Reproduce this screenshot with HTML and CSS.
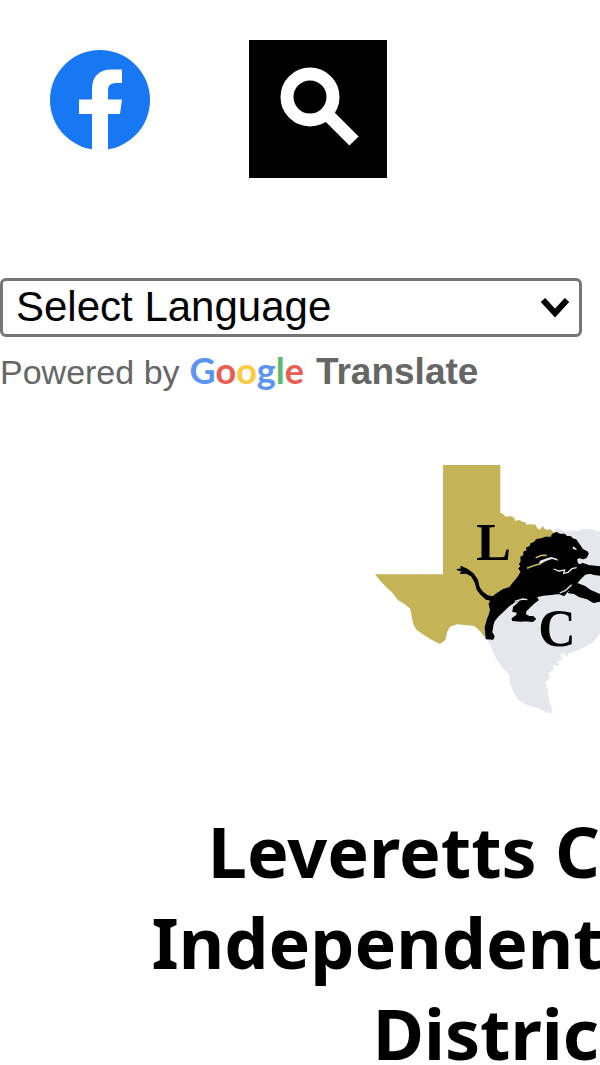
FILE: index.html
```html
<!DOCTYPE html>
<html lang="en">
<head>
    <meta charset="UTF-8">
    <meta name="viewport" content="width=device-width, initial-scale=1.0">
    <title>Leveretts Chapel Independent School District</title>
    <link rel="stylesheet" href="styles.css">
</head>
<body>
    <div class="topbar">
        <a class="facebook" href="#" aria-label="Facebook">
            <svg viewBox="0 0 100 100" width="100" height="100">
                <circle cx="50" cy="50" r="50" fill="#1877f2"/>
                <path fill="#fff" d="M42 100V64H29V49.500H42V39C42 26 50 19.500 61 19.500H72V33H67C61 33 58 35 58 40V49.500H72L70 64H58V100Z"/>
            </svg>
        </a>
        <button class="search" type="button" aria-label="Search">
            <svg viewBox="0 0 138 138" width="138" height="138" fill="none" stroke="#fff">
                <circle cx="61" cy="57" r="23" stroke-width="13"/>
                <path d="M77 73L105 101" stroke-width="13"/>
            </svg>
        </button>
    </div>

    <div class="translate">
        <div class="selectWrap">
            <select class="language" aria-label="Language Translate Widget">
                <option>Select Language</option>
            </select>
            <svg class="arrow" viewBox="0 0 28 20" width="28" height="20">
                <path d="M2 2L14 15L26 2" fill="none" stroke="#000" stroke-width="6"/>
            </svg>
        </div>
        <div class="powered">
            <span>Powered by</span>
            <a class="google" href="#">
                <span class="wordmark"><span class="blue">G</span><span class="red">o</span><span class="yellow">o</span><span class="blue">g</span><span class="green">l</span><span class="red">e</span></span>
                <b>Translate</b>
            </a>
        </div>
    </div>

    <header class="school">
        <svg class="logo" viewBox="15 30 792 747" width="264" height="249">
            <!-- state -->
            <path fill="#e6e7ec" d="M545 232L562 220L575 224L590 232L606 226L625 228L640 222L660 222L690 230L720 238L755 245L765 330L790 390L786 450L770 490L720 515L690 535L670 562L640 578L620 588L594 596L592 607L580 594L570 600L578 615L562 620L566 632L548 630L550 645L535 655L540 668L526 682L532 700L536 730L549 773L532 774L505 760L470 750L444 735L430 710L420 685L418 660L395 635L375 605L358 565L345 548L400 400Z"/>
            <path fill="#c5b358" d="M219 30H391V173L400 178L408 186L416 184L424 184L433 188L435 197L448 195L458 201L465 201L470 209L486 207L491 211L495 206L501 218L508 224L519 214L524 222L532 224L542 223L552 234L500 400L360 480L345 549L330 528L313 513L262 508L240 515L232 530L226 555L210 567L190 557L165 542L140 525L131 510L126 490L121 462L104 447L84 436L66 412L48 396L28 374L15 358H219Z"/>
            <!-- lion -->
            <g transform="translate(240 195)">
                <path stroke="#000" stroke-width="4" stroke-linejoin="round" d="M22 149L36 147L33 140L51 148L59 154L70 162L82 180L87 202L98 217L113 228L128 231L143 220L160 209L179 203L190 189L205 171L214 155L207 146L214 138L209 132L214 124L213 111L222 107L222 96L232 92L230 84L242 78L242 72L253 67L260 59L274 57L286 52L304 52L307 44L319 38L329 43L343 43L349 49L361 50L368 57L378 60L384 69L391 79L398 89L412 96L414 101L409 112L399 116L388 112L379 117L382 130L388 135L398 131L416 137L450 141V165L432 163L421 159L405 162L390 177L379 190L403 199L420 211L450 224V243L431 247L412 236L389 230L373 220L356 218L369 209L354 212L342 226L327 220L303 223L280 225L259 230L264 240L252 249L239 261L227 273L226 284L237 290L249 290L256 297L248 304L225 302L212 303L188 301L187 296L201 286L202 276L189 274L191 262L202 252L218 238L194 245L178 256L157 276L145 287L132 303L128 317L125 337L132 348L129 357L109 356L106 322L112 300L118 284L122 270L118 252L123 240L108 237L93 223L82 209L76 187L65 168L51 160L32 160L38 153Z"/>
                <path fill="none" stroke="#e6e7ec" stroke-width="4" d="M311 147L326 153L344 150L341 160L354 157L366 146L380 143M329 219L347 211L365 194M194 244L218 237L232 239"/>
                <path fill="none" stroke="#c5b358" stroke-width="5" d="M231 145L250 137L269 132L285 122M257 113L275 106L290 106"/>
                <path fill="#e6e7ec" d="M270 122L290 115L304 111L321 116L325 122L306 117L286 124L266 132ZM369 79L377 84L381 91L368 86Z"/>
            </g>
            <text class="initial" x="319" y="316">L</text>
            <text class="initial" x="505" y="573">C</text>
        </svg>
        <h1 class="title">Leveretts Chapel Independent School District</h1>
    </header>
</body>
</html>
```

FILE: styles.css
```css
body{
    margin: 0px;
    background-color: white;
    font-family: "Liberation Sans", Arial, sans-serif;
    overflow-x: hidden;
}
.topbar{
    display: flex;
    align-items: flex-start;
    gap: 99px;
    padding: 40px 50px 100px;
}
.facebook{
    display: block;
    padding-top: 10px;
}
.facebook svg, .search svg, .logo{
    display: block;
}
.search{
    padding: 0px;
    border: none;
    background-color: black;
}
.translate{
    color: #666;
}
.selectWrap{
    position: relative;
    width: 97%;
}
.language{
    display: block;
    width: 100%;
    height: 59px;
    padding: 0px 13px 2px;
    border: 3px solid #767676;
    border-radius: 6px;
    appearance: none;
    background-color: white;
    color: black;
    font-family: inherit;
    font-size: 42px;
}
/* drop-down arrow over the select */
.arrow{
    position: absolute;
    right: 13px;
    top: 20px;
    pointer-events: none;
}
.powered{
    display: flex;
    align-items: baseline;
    gap: 10px;
    padding-top: 10px;
    font-size: 34px;
    line-height: 46px;
    white-space: nowrap;
}
.google{
    display: flex;
    align-items: baseline;
    gap: 12px;
    color: #666;
    font-size: 37px;
    text-decoration: none;
}
.wordmark{
    font-family: Lato, sans-serif;
    font-size: 36px;
    font-weight: bold;
}
.blue{
    color: #5a94f5;
}
.red{
    color: #ea5d52;
}
.yellow{
    color: #fbcb3c;
}
.green{
    color: #5bb974;
}
/* wider than the window, the right part is cut off */
.school{
    display: flex;
    flex-direction: column;
    align-items: center;
    width: 169%;
    padding-top: 70px;
}
.initial{
    font-family: "Liberation Serif", serif;
    font-size: 156px;
    font-weight: bold;
}
.title{
    width: 760px;
    margin: 92px 0px 0px;
    padding-right: 12px;
    color: black;
    font-family: "Noto Sans", sans-serif;
    font-size: 70px;
    font-weight: bold;
    line-height: 91px;
    text-align: center;
}
```
